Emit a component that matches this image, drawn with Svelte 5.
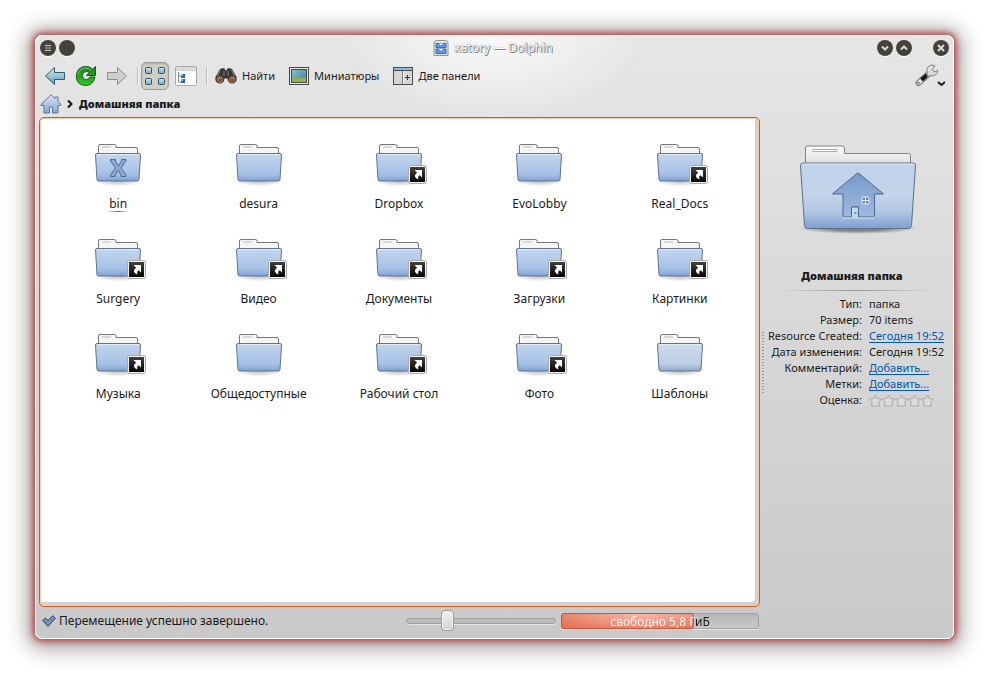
<script>
  // Folder contents
  const folders = [
    { name: "bin", emblem: true, selected: true },
    { name: "desura" },
    { name: "Dropbox", link: true },
    { name: "EvoLobby" },
    { name: "Real_Docs", link: true },
    { name: "Surgery", link: true },
    { name: "Видео", link: true },
    { name: "Документы", link: true },
    { name: "Загрузки", link: true },
    { name: "Картинки", link: true },
    { name: "Музыка", link: true },
    { name: "Общедоступные" },
    { name: "Рабочий стол", link: true },
    { name: "Фото", link: true },
    { name: "Шаблоны", pale: true },
  ];

  const details = [
    { label: "Тип:", value: "папка" },
    { label: "Размер:", value: "70 items" },
    { label: "Resource Created:", value: "Сегодня 19:52", href: "#created" },
    { label: "Дата изменения:", value: "Сегодня 19:52" },
    { label: "Комментарий:", value: "Добавить...", href: "#comment" },
    { label: "Метки:", value: "Добавить...", href: "#tags" },
  ];

  let zoom = $state(25);
  let rating = $state(0);
  let usedSpace = 68;
</script>

<div class="window">
  <header class="titlebar">
    <button class="round" aria-label="Меню окна">
      <svg width="16" height="16" viewBox="0 0 16 16"><path d="M5 5.500h6M5 8h6M5 10.500h6" stroke="#c9c7c2" /></svg>
    </button>
    <button class="round" aria-label="На всех рабочих столах"></button>
    <div class="title">
      <svg width="16" height="16" viewBox="0 0 16 16">
        <path d="M1 15.500V3q0-2.500 2.500-2.500h9Q15 .5 15 3v12.500z" fill="#e4e2df" stroke="#96938f" />
        <path d="M3 3.500h10v4H3zM3 9h10v4.500H3z" fill="#5aa0ee" stroke="#2b6cc4" />
        <path d="M6 3.500v2h4v-2M6 9v2h4V9" fill="#fff" stroke="#2b5ea8" stroke-width=".7" />
      </svg>
      <span>xatory — Dolphin</span>
    </div>
    <button class="round" aria-label="Свернуть">
      <svg width="16" height="16" viewBox="0 0 16 16"><path d="M5 6.500l3 3 3-3" fill="none" stroke="#dcdad5" stroke-width="2" /></svg>
    </button>
    <button class="round" aria-label="Развернуть">
      <svg width="16" height="16" viewBox="0 0 16 16"><path d="M5 9.500l3-3 3 3" fill="none" stroke="#dcdad5" stroke-width="2" /></svg>
    </button>
    <button class="round close" aria-label="Закрыть">
      <svg width="16" height="16" viewBox="0 0 16 16"><path d="M5 5l6 6M11 5l-6 6" stroke="#dcdad5" stroke-width="2" /></svg>
    </button>
  </header>

  <nav class="toolbar">
    <button class="tool" aria-label="Назад">
      <svg width="22" height="20" viewBox="0 0 22 20">
        <defs>
          <linearGradient id="back" x2="0" y2="1"><stop stop-color="#d5eaf2" /><stop offset="1" stop-color="#5c9fb8" /></linearGradient>
        </defs>
        <path d="M1.500 10l9-8.500V6.500h10v7h-10v5z" fill="url(#back)" stroke="#2d5b70" stroke-linejoin="round" />
      </svg>
    </button>
    <button class="tool" aria-label="Обновить">
      <svg width="22" height="22" viewBox="0 0 22 22">
        <defs>
          <linearGradient id="reload" x2="0" y2="1"><stop stop-color="#1e7d1c" /><stop offset="1" stop-color="#2dcc20" /></linearGradient>
        </defs>
        <path d="M20.500 1.500v9h-9l3-3.200q-3.300-2-6 .2-2.500 3 0 6 3.600 3 6.500-1.500h5q-2 8.500-9.500 8.500Q1.500 20 1.300 11 2 2 10.500 1.400q4.500 0 7 2.800z" fill="url(#reload)" stroke="#125c14" stroke-linejoin="round" />
        <path d="M3 9q1.500-5.500 7-6 4 0 6 2" fill="none" stroke="#7fce76" />
      </svg>
    </button>
    <button class="tool" aria-label="Вперёд" disabled>
      <svg width="22" height="20" viewBox="0 0 22 20">
        <path d="M20.500 10l-9-8.500V6.500h-10v7h10v5z" fill="#cfcfcf" stroke="#8e8e8e" stroke-linejoin="round" />
      </svg>
    </button>
    <i class="separator"></i>
    <button class="tool pressed" aria-label="Значки">
      <svg width="20" height="20" viewBox="0 0 20 20">
        <defs>
          <linearGradient id="tile" x2="0" y2="1"><stop stop-color="#d3e8f0" /><stop offset="1" stop-color="#6fa8bf" /></linearGradient>
        </defs>
        <g fill="url(#tile)" stroke="#2b5366">
          <rect x=".5" y="1.500" width="6" height="6" rx="1" /><rect x="13.500" y="1.500" width="6" height="6" rx="1" />
          <rect x=".5" y="12.500" width="6" height="6" rx="1" /><rect x="13.500" y="12.500" width="6" height="6" rx="1" />
        </g>
      </svg>
    </button>
    <button class="tool details" aria-label="Таблица">
      <svg width="22" height="20" viewBox="0 0 22 20">
        <rect x=".5" y=".5" width="21" height="19" rx="1" fill="#fff" stroke="#aaa" />
        <path d="M1 1h20v4H1z" fill="#d5d5d5" />
        <path d="M3 3h2M12 3h1M15 3h1M18 3h1" stroke="#fff" />
        <path d="M3.500 6v10H7M3.500 10H7" fill="none" stroke="#888" />
        <path d="M6 8h4v4H6zM6 13h4v4H6z" fill="#2166c0" />
        <path d="M6 8h2v2H6zM6 13h2v2H6z" fill="#79b5f2" />
      </svg>
    </button>
    <i class="separator"></i>
    <button class="tool labelled">
      <svg width="22" height="18" viewBox="0 0 22 18">
        <path d="M5 2l4-1 2 3 2-3 4 1 4.500 8q1 6-4 6.500-4.500 0-5-5h-3q-.5 5-5 5Q-.5 16 .5 10z" fill="#38342f" />
        <path d="M5.500 3l-3 6M16.500 3l3 6M9 4v5M13 4v5" stroke="#8b8680" />
        <circle cx="4.800" cy="12.500" r="2.800" fill="#8b4a18" stroke="#888" /><circle cx="17.200" cy="12.500" r="2.800" fill="#8b4a18" stroke="#888" />
        <path d="M3 12q2-2 3 0M16 12q2-2 3 0" fill="none" stroke="#e59349" />
      </svg>
      Найти
    </button>
    <button class="tool labelled">
      <svg width="20" height="18" viewBox="0 0 20 18">
        <defs>
          <linearGradient id="sky" x2="1" y2="1"><stop stop-color="#8fbfd0" /><stop offset="1" stop-color="#3e7f9d" /></linearGradient>
        </defs>
        <rect x=".5" y=".5" width="19" height="17" fill="#eee" stroke="#444" />
        <rect x="2.500" y="2.500" width="15" height="13" fill="url(#sky)" stroke="#444" />
        <path d="M3 11h14v4H3z" fill="#8fb35c" />
      </svg>
      Миниатюры
    </button>
    <button class="tool labelled">
      <svg width="20" height="18" viewBox="0 0 20 18">
        <rect x=".5" y=".5" width="19" height="17" fill="#d6d6d6" stroke="#4c4c4c" />
        <path d="M1 1h18v2H1z" fill="#8bbdd4" />
        <path d="M0 3.500h20" stroke="#4c4c4c" /><path d="M9.500 4v13" stroke="#777" /><path d="M10.500 4v13" stroke="#fff" />
        <path d="M14.500 8v5M12 10.500h5" stroke="#333" />
      </svg>
      Две панели
    </button>
    <button class="tool settings" aria-label="Настройка">
      <svg width="30" height="24" viewBox="0 0 30 24">
        <path d="M3.500 19L14 9.500" stroke="#777" stroke-width="6" stroke-linecap="round" />
        <path d="M3.500 19L14 9.500" stroke="#e4e4e4" stroke-width="4" stroke-linecap="round" />
        <path d="M6.500 16l5.500-5" stroke="#161616" stroke-width="4" />
        <circle cx="3.500" cy="19" r="1.300" fill="#888" />
        <path d="M12 8Q11 2 17 1l3 1-3 3.500 3 2.500 2.500-2q1 3-2 5-3 1.500-5 .5l-3 1z" fill="#d9d9d9" stroke="#868686" />
        <path d="M13.500 7q-.5-3 3-4.500" fill="none" stroke="#fff" />
        <path d="M23 18l3.500 3 3.500-3" fill="none" stroke="#1a1a1a" stroke-width="2" />
      </svg>
    </button>
  </nav>

  <nav class="breadcrumb">
    <a href="#home" aria-label="Домой">
      <svg width="22" height="20" viewBox="0 0 22 20">
        <defs>
          <linearGradient id="home" x2="0" y2="1"><stop stop-color="#dce6f3" /><stop offset="1" stop-color="#86a6d2" /></linearGradient>
        </defs>
        <path d="M1 10.500L11 .8l4 3.700V3h3v4.500l3 3-.5 1H18v7.500h-5.500v-6h-3v6H4v-7.500H1z" fill="url(#home)" stroke="#5b7699" stroke-linejoin="round" />
      </svg>
    </a>
    <svg width="6" height="8" viewBox="0 0 6 8"><path d="M1 .5L4.500 4 1 7.500" fill="none" stroke="#111" stroke-width="2" /></svg>
    <b>Домашняя папка</b>
  </nav>

  <div class="content">
    <div class="left">
      <main class="view">
        <ul class="grid">
          {#each folders as folder (folder.name)}
            <li>
              <a class="folder" href="#{folder.name}">
                <span class="icon">
                  <svg width="48" height="44" viewBox="0 0 48 44">
                    <defs>
                      <linearGradient id="front" x2="0" y2="1"><stop stop-color="#c3d6ee" /><stop offset=".75" stop-color="#a6c1e6" /><stop offset="1" stop-color="#7ea1d2" /></linearGradient>
                      <linearGradient id="pale" x2="0" y2="1"><stop stop-color="#cfdbea" /><stop offset=".75" stop-color="#bccde4" /><stop offset="1" stop-color="#8fa9cb" /></linearGradient>
                      <radialGradient id="shade"><stop stop-color="#000" stop-opacity=".25" /><stop offset="1" stop-color="#000" stop-opacity="0" /></radialGradient>
                    </defs>
                    <ellipse cx="24" cy="38.500" rx="24" ry="5" fill="url(#shade)" />
                    <path d="M4.500 14V3q0-1.500 1.500-1.500h14.500q1.500 0 1.500 1.500v1.500h20q1.500 0 1.500 1.500v8z" fill="#f5f5f5" stroke="#777" />
                    <path d="M8 4h9" stroke="#bbb" />
                    <path d="M1.500 12q0-1.500 1.500-1.500h42q1.500 0 1.500 1.500l-1.500 24.500q-.2 1.500-2 1.500H5q-1.800 0-2-1.500z" fill="url(#{folder.pale ? 'pale' : 'front'})" stroke="#5f7391" />
                    <path d="M3 11.500h42" stroke="#e3edf9" />
                    {#if folder.emblem}
                      <path d="M16.500 16.500h5v1.500l3 5 3-5v-1.500h4.500v1.500l-5 7 5 7v1.500h-5v-1.500l-3-5-3 5v1.500h-4.500v-1.500l5-7-5-7z" fill="#8caad3" stroke="#4c6a96" />
                    {/if}
                  </svg>
                  {#if folder.link}
                    <svg class="link" width="19" height="19" viewBox="0 0 19 19">
                      <defs><linearGradient id="dark" x2="0" y2="1"><stop stop-color="#404040" /><stop offset="1" stop-color="#050505" /></linearGradient></defs>
                      <rect x=".5" y=".5" width="18" height="18" rx="2" fill="#f3f3f3" stroke="#aaa" />
                      <rect x="2" y="2" width="15" height="15" fill="url(#dark)" />
                      <path d="M6.500 5h7.500v7.500l-2.200-2.200q-2.500 1-1.300 4.200-3.800-1.500-3.500-4 .3-1.800 2.200-2.800z" fill="#fff" />
                    </svg>
                  {/if}
                </span>
                <span class="name" class:selected={folder.selected}>{folder.name}</span>
              </a>
            </li>
          {/each}
        </ul>
      </main>

      <footer class="status">
        <svg width="14" height="12" viewBox="0 0 14 12">
          <path d="M.8 5.500l2.700-2.500 2.500 2.500L10.800.7l2.600 2.500-7.400 8.200z" fill="#7294bb" stroke="#243f61" stroke-linejoin="round" />
        </svg>
        <span class="message">Перемещение успешно завершено.</span>
        <input class="zoom" type="range" min="0" max="100" bind:value={zoom} aria-label="Размер значков" />
        <div class="space" role="progressbar" aria-label="Место на диске" aria-valuenow={usedSpace} aria-valuemin="0" aria-valuemax="100" style="--used: {usedSpace}%">
          <div class="used"></div>
          <span class="free">свободно 5,8 ГиБ</span>
        </div>
      </footer>
    </div>

    <div class="splitter"></div>

    <aside class="info">
      <svg class="preview" width="118" height="94" viewBox="0 0 118 94">
        <defs>
          <linearGradient id="bigFront" x2="0" y2="1"><stop stop-color="#bfd3ec" /><stop offset=".5" stop-color="#c3d4ea" /><stop offset=".75" stop-color="#b0c6e4" /><stop offset="1" stop-color="#7d9fd0" /></linearGradient>
          <linearGradient id="paper" x2="0" y2="1"><stop stop-color="#fafafa" /><stop offset="1" stop-color="#dedede" /></linearGradient>
          <linearGradient id="emblem" x2="0" y2="1"><stop stop-color="#769aca" /><stop offset="1" stop-color="#a1bade" /></linearGradient>
          <radialGradient id="bigShade"><stop offset=".5" stop-color="#000" stop-opacity=".4" /><stop offset="1" stop-color="#000" stop-opacity="0" /></radialGradient>
        </defs>
        <ellipse cx="59" cy="83" rx="59" ry="6" fill="url(#bigShade)" />
        <path d="M6.500 20V3q0-2 2-2h35q2 0 2 2v5.500h64q2 0 2 2V20z" fill="url(#paper)" stroke="#818181" />
        <rect x="13.500" y="4.500" width="25" height="2" rx="1" fill="#fff" stroke="#aaa" />
        <path d="M1.500 20.500q0-2.500 2.500-2.500h110q2.500 0 2.500 2.500l-4 60q-.5 3-3 3h-101q-2.500 0-3-3z" fill="url(#bigFront)" stroke="#5f6f86" />
        <path d="M3 19.200h112" stroke="#e3edf8" />
        <path d="M58 28.500q1-1 2 0l24.500 20.500H75.500v21q0 2-2 2H59.500V62h-7v10H46q-2 0-2-2V49H33.500z" fill="url(#emblem)" stroke="#49688f" stroke-linejoin="round" />
        <path d="M52.500 72V62h7v10" fill="#c6d7ee" stroke="#49688f" />
        <path d="M44 73h31" stroke="#d8e5f5" />
        <rect x="63" y="52" width="7" height="7" rx="1" fill="#5f82b4" stroke="#eef4fc" />
        <path d="M66.500 52v7M63 55.500h7" stroke="#eef4fc" />
        <rect x="55.500" y="67" width="2" height="2" fill="#6b8ab5" />
      </svg>
      <h2>Домашняя папка</h2>
      <hr />
      <table>
        <tbody>
          {#each details as row}
            <tr>
              <th scope="row">{row.label}</th>
              <td>
                {#if row.href}<a href={row.href}>{row.value}</a>{:else}{row.value}{/if}
              </td>
            </tr>
          {/each}
          <tr>
            <th scope="row">Оценка:</th>
            <td>
              <div class="stars">
                {#each [1, 2, 3, 4, 5] as star}
                  <button aria-label="Оценка {star}" onclick={() => (rating = star)}>
                    <svg width="13" height="13" viewBox="0 0 13 13">
                      <path d="M6.500 1l1.700 3.500 4.300.5-2.700 2.800.7 4.200H2.500l.7-4.200L.5 5l4.300-.5z" fill={rating >= star ? "#f0c040" : "#dcdcdc"} stroke="#a8a8a8" stroke-linejoin="round" />
                    </svg>
                  </button>
                {/each}
              </div>
            </td>
          </tr>
        </tbody>
      </table>
    </aside>
  </div>
</div>

<style>
  :global(body) {
    margin: 0;
    background: #fff;
  }

  :global(#app) {
    box-sizing: border-box;
    height: 100vh;
    padding: 35px 35px 35px;
  }

  .window {
    box-sizing: border-box;
    display: flex;
    flex-direction: column;
    height: 100%;
    border: 1px solid #fff;
    border-radius: 7px;
    background:
      radial-gradient(ellipse 150px 90px at 50% 0, rgba(255, 255, 255, 0.75), rgba(255, 255, 255, 0)),
      linear-gradient(#e6e6e6, #e0e0e0 20%, #c9c9c9);
    box-shadow:
      0 0 6px 2px rgba(178, 40, 40, 0.85),
      0 2px 20px 8px rgba(70, 50, 50, 0.45);
    font-family: "Noto Sans", sans-serif;
    font-size: 11px;
    line-height: 16px;
    color: #1a1a1a;
  }

  button {
    padding: 0;
    border: none;
    background: none;
    font: inherit;
    color: inherit;
    cursor: pointer;
  }

  svg {
    display: block;
    flex: none;
  }

  .titlebar {
    display: flex;
    align-items: center;
    gap: 3px;
    height: 24px;
    padding: 0 4px;
  }

  .round {
    width: 16px;
    height: 16px;
    border-radius: 50%;
    background: #45423c;
    box-shadow: 0 1px 0 #fff;
  }

  .close {
    margin-left: 18px;
  }

  .title {
    display: flex;
    flex: 1;
    align-items: center;
    justify-content: center;
    gap: 5px;
    padding-left: 34px;
    font-size: 12px;
    color: #fff;
    text-shadow: 0 0 1px #555, 1px 1px 0 #888;
  }

  .toolbar {
    display: flex;
    align-items: center;
    height: 31px;
    padding: 0 8px;
  }

  .tool {
    display: flex;
    align-items: center;
    justify-content: center;
    width: 22px;
    margin-right: 9px;
  }

  .tool.pressed {
    box-sizing: border-box;
    width: 28px;
    height: 28px;
    margin-right: 6px;
    border: 1px solid #a19d98;
    border-radius: 5px;
    background: #d1cdc7;
    box-shadow: inset 0 1px 2px #aaa7a2;
  }

  .separator {
    width: 1px;
    height: 18px;
    margin-right: 3px;
    background: #bdbdbd;
    box-shadow: 1px 0 0 #f3f3f3;
  }

  .details + .separator {
    margin-right: 8px;
  }

  .tool.labelled {
    gap: 5px;
    width: auto;
    margin-right: 14px;
  }

  .tool.settings {
    width: 30px;
    margin: 0 0 0 auto;
  }

  .breadcrumb {
    display: flex;
    align-items: center;
    gap: 5px;
    height: 26px;
    padding-left: 4px;
  }

  .breadcrumb b {
    margin-left: 1px;
  }

  .breadcrumb b,
  h2 {
    font-size: 11px;
    font-weight: 900;
  }

  .content {
    display: flex;
    flex: 1;
    min-height: 0;
  }

  .left {
    display: flex;
    flex: 1;
    flex-direction: column;
    padding-left: 3px;
  }

  .view {
    flex: 1;
    border: 1px solid #cf5a1d;
    border-radius: 5px;
    background: #fff;
    box-shadow:
      inset 0 0 0 1px #f8cdae,
      inset -4px -4px 0 #d3d2d1;
    overflow: hidden;
  }

  .grid {
    display: grid;
    grid-template-columns: repeat(5, 1fr);
    grid-auto-rows: 95px;
    margin: 0;
    padding: 25px 9px 0 8px;
    list-style: none;
  }

  .folder {
    display: flex;
    flex-direction: column;
    align-items: center;
    gap: 9px;
    font-size: 12px;
    color: inherit;
    text-decoration: none;
  }

  .icon {
    position: relative;
  }

  /* Symlink emblem sits on the corner of the folder */
  .link {
    position: absolute;
    right: -4px;
    bottom: 3px;
  }

  .name.selected {
    padding: 0 2px;
    background: linear-gradient(90deg, transparent, #c23b3b, transparent) bottom / 100% 1px no-repeat;
  }

  .status {
    display: flex;
    align-items: center;
    height: 27px;
    padding: 0 1px 4px 3px;
  }

  .message {
    flex: 1;
    padding-left: 3px;
    font-size: 12px;
  }

  .zoom {
    width: 150px;
    height: 22px;
    margin: 0 5px 0 0;
    appearance: none;
    background: none;
  }

  .zoom::-webkit-slider-runnable-track {
    height: 6px;
    box-sizing: border-box;
    border: 1px solid #9f9f9f;
    border-radius: 3px;
    background: #bcbcbc;
    box-shadow: 0 1px 0 #e4e4e4;
  }

  .zoom::-webkit-slider-thumb {
    width: 13px;
    height: 21px;
    box-sizing: border-box;
    margin-top: -9px;
    appearance: none;
    border: 1px solid #9c9995;
    border-radius: 4px;
    background: linear-gradient(#f2f0ee, #d6d3cf);
    box-shadow: inset 0 0 0 1px #f5f4f2;
  }

  .space {
    position: relative;
    box-sizing: border-box;
    width: 198px;
    height: 16px;
    border: 1px solid #a2a2a2;
    border-radius: 3px;
    background: linear-gradient(#b7b7b7, #c8c8c8);
    box-shadow: 0 1px 0 #e6e6e6;
  }

  .used {
    position: absolute;
    inset: -1px auto -1px -1px;
    box-sizing: border-box;
    width: var(--used);
    border: 1px solid #cf5138;
    border-radius: 3px;
    background: radial-gradient(ellipse at 60% 0, #f8b9a8, #e36c50);
  }

  .free {
    position: absolute;
    inset: 0;
    background: linear-gradient(90deg, #fff var(--used), #1a1a1a var(--used));
    background-clip: text;
    font-size: 12px;
    line-height: 15px;
    text-align: center;
    color: transparent;
  }

  .splitter {
    align-self: center;
    width: 2px;
    height: 62px;
    margin: 0 4px 30px 2px;
    background: repeating-linear-gradient(#999 0 1px, transparent 1px 3px);
  }

  .info {
    width: 185px;
    padding-top: 28px;
  }

  .preview {
    margin: 0 auto 0 31px;
  }

  h2 {
    margin: 29px 17px 6px 0;
    line-height: 16px;
    text-align: center;
  }

  hr {
    height: 1px;
    margin: 0 16px 5px 8px;
    border: none;
    background: linear-gradient(90deg, transparent, #949494, transparent);
  }

  table {
    border-collapse: collapse;
    white-space: nowrap;
  }

  th {
    width: 93px;
    padding: 0 7px 0 0;
    font-weight: normal;
    text-align: right;
  }

  td {
    padding: 0;
  }

  td a {
    color: #0057ae;
    text-underline-offset: 2px;
  }

  .stars {
    display: flex;
  }
</style>
